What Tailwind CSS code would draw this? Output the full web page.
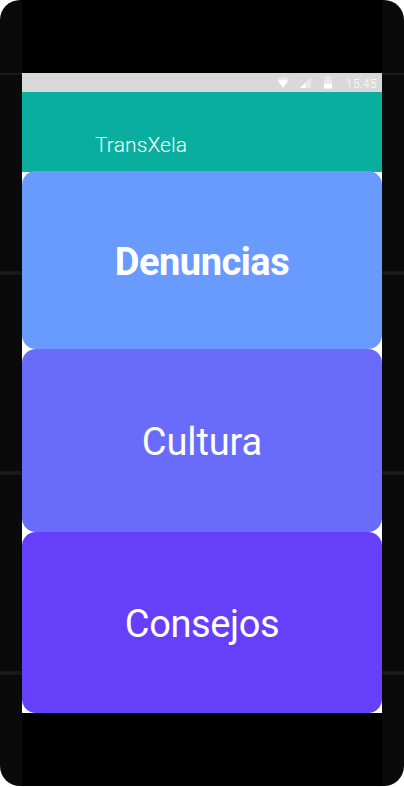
<!DOCTYPE html>
<html lang="es">
<head>
<meta charset="utf-8">
<title>TransXela</title>
<script src="https://cdn.jsdelivr.net/npm/@tailwindcss/browser@4"></script>
</head>
<body class="bg-white overflow-hidden font-['Roboto',sans-serif]">
<div class="w-[404px] h-[786px] rounded-[20px] bg-[#0a0a0a] overflow-hidden flex">
  <div class="w-[22px] flex flex-col">
    <div class="mt-[73px] h-[2px] bg-[#191919]"></div>
    <div class="mt-[196px] h-[4px] bg-[#191919]"></div>
    <div class="mt-[196px] h-[4px] bg-[#191919]"></div>
    <div class="mt-[196px] h-[4px] bg-[#191919]"></div>
  </div>
  <main class="w-[360px] bg-black pt-[73px]">
    <div class="h-[640px] bg-white flex flex-col text-white">
      <div class="h-[19px] shrink-0 bg-[#d9d9d9] flex items-center justify-end pr-[5px]">
        <svg class="w-[12px] h-[11px] mr-[11px]" viewBox="0 0 12 11"><path d="M0 2Q6-2 12 2L6 11Z" fill="#fff" fill-opacity=".4"/><path d="M1 4Q6 1.5 11 4L6 11Z" fill="#fff"/></svg>
        <svg class="w-[11px] h-[11px] mr-[13px]" viewBox="0 0 11 11"><path d="M0 11L11 0V11Z" fill="#fff" fill-opacity=".4"/><path d="M0 11L5.5 5.5V11Z" fill="#fff"/></svg>
        <svg class="w-[8px] h-[13px] mr-[14px]" viewBox="0 0 8 13"><path d="M0 1.5H2V0H6V1.5H8V7.5H0Z" fill="#fff" fill-opacity=".4"/><path d="M0 7.5H8V12.5H0Z" fill="#fff"/></svg>
        <span class="text-[12px] leading-[19px] font-light tracking-[0.4px] pt-[3px]">15:45</span>
      </div>
      <header class="h-[80px] shrink-0 bg-[#0aae9e] pl-[73px] pt-[39px]">
        <h1 class="text-[21px] leading-[28px] font-light tracking-[0.1px]">TransXela</h1>
      </header>
      <button class="-mt-px h-[178px] shrink-0 rounded-[14px] bg-[#699bff] text-[38px] font-bold flex items-center justify-center pt-[4px]"><span class="tracking-[-0.5px]">Denuncias</span></button>
      <button class="h-[183px] shrink-0 rounded-[14px] bg-[#696cfb] text-[38px] flex items-center justify-center pt-[3px]"><span class="tracking-[-0.1px]">Cultura</span></button>
      <button class="h-[181px] shrink-0 rounded-[14px] bg-[#663ffb] text-[38px] flex items-center justify-center pt-[3px]"><span class="tracking-[-0.4px]">Consejos</span></button>
    </div>
  </main>
  <div class="w-[22px] flex flex-col">
    <div class="mt-[73px] h-[2px] bg-[#191919]"></div>
    <div class="mt-[196px] h-[4px] bg-[#191919]"></div>
    <div class="mt-[196px] h-[4px] bg-[#191919]"></div>
    <div class="mt-[196px] h-[4px] bg-[#191919]"></div>
  </div>
</div>
</body>
</html>
